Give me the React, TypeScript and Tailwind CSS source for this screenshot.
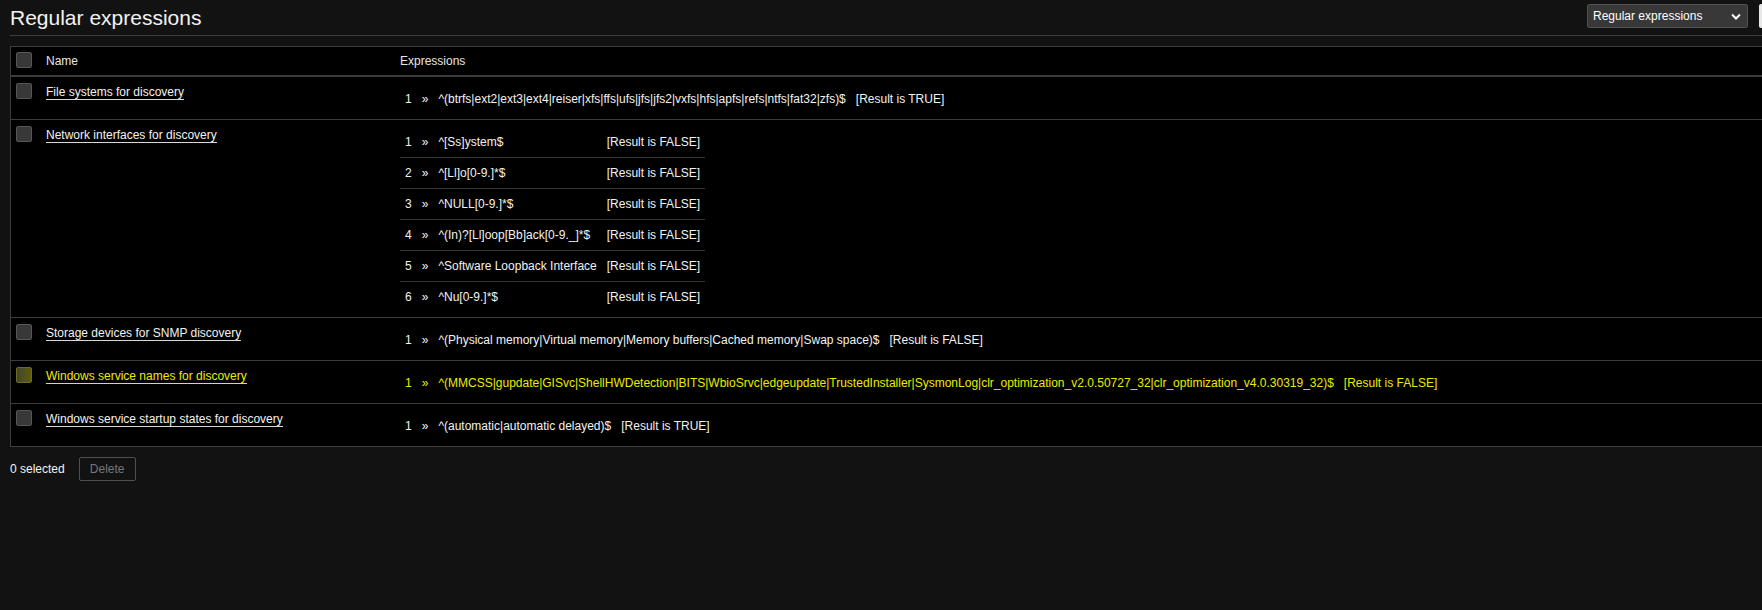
import React from "react";

// one regular expression line with its test result
interface Expression {
  expr: string;
  result: "TRUE" | "FALSE";
}

// a named set of expressions
interface RegexSet {
  name: string;
  highlight?: boolean;
  expressions: Expression[];
}

const regexSets: RegexSet[] = [
  {
    name: "File systems for discovery",
    expressions: [
      {
        expr: "^(btrfs|ext2|ext3|ext4|reiser|xfs|ffs|ufs|jfs|jfs2|vxfs|hfs|apfs|refs|ntfs|fat32|zfs)$",
        result: "TRUE",
      },
    ],
  },
  {
    name: "Network interfaces for discovery",
    expressions: [
      { expr: "^[Ss]ystem$", result: "FALSE" },
      { expr: "^[Ll]o[0-9.]*$", result: "FALSE" },
      { expr: "^NULL[0-9.]*$", result: "FALSE" },
      { expr: "^(In)?[Ll]oop[Bb]ack[0-9._]*$", result: "FALSE" },
      { expr: "^Software Loopback Interface", result: "FALSE" },
      { expr: "^Nu[0-9.]*$", result: "FALSE" },
    ],
  },
  {
    name: "Storage devices for SNMP discovery",
    expressions: [
      {
        expr: "^(Physical memory|Virtual memory|Memory buffers|Cached memory|Swap space)$",
        result: "FALSE",
      },
    ],
  },
  {
    name: "Windows service names for discovery",
    highlight: true,
    expressions: [
      {
        expr: "^(MMCSS|gupdate|GISvc|ShellHWDetection|BITS|WbioSrvc|edgeupdate|TrustedInstaller|SysmonLog|clr_optimization_v2.0.50727_32|clr_optimization_v4.0.30319_32)$",
        result: "FALSE",
      },
    ],
  },
  {
    name: "Windows service startup states for discovery",
    expressions: [{ expr: "^(automatic|automatic delayed)$", result: "TRUE" }],
  },
];

// square checkbox, olive when the row is highlighted
function Checkbox({ highlight }: { highlight?: boolean }) {
  return highlight ? (
    <span className="block w-[16px] h-[16px] rounded-[2px] border border-[#6e6e1e] bg-gradient-to-r from-[#44442c] to-[#5c5c00]" />
  ) : (
    <span className="block w-[16px] h-[16px] rounded-[2px] border border-[#555555] bg-[#383838]" />
  );
}

export default function App() {
  return (
    <div className="w-[1762px] h-[610px] overflow-hidden bg-[#121212] text-[#f2f2f2] text-[12px] leading-[14px] font-['Liberation_Sans',Arial,sans-serif]">
      <div className="w-[1858px]">
        {/* page header */}
        <div className="ml-[10px] w-[1789px] h-[36px] flex items-start border-b border-[#3c3c3c]">
          <h1 className="pt-[6px] text-[21px] leading-[24px] text-[#f2f2f2]">Regular expressions</h1>
          <div className="ml-auto mt-[4px] w-[161px] h-[24px] flex items-center justify-between pl-[5px] pr-[6px] bg-[#383838] border border-[#515151] rounded-[2px] text-white">
            <span>Regular expressions</span>
            <svg width="10" height="7" viewBox="0 0 10 7" className="mt-[1px]">
              <polyline points="1,1.5 5,5.5 9,1.5" fill="none" stroke="#ffffff" strokeWidth="2" />
            </svg>
          </div>
          <div className="ml-[11px] mt-[4px] w-[40px] h-[24px] bg-[#e8e8e8] rounded-[2px]" />
        </div>

        {/* list table */}
        <div className="mt-[10px] ml-[10px] w-[1848px] border border-[#3c3c3c] bg-black">
          <div className="grid grid-cols-[30px_354px_1fr] border-b-2 border-[#3c3c3c] text-[#e6e6e6]">
            <div className="pl-[5px] pt-[5px] pb-[7px]">
              <Checkbox />
            </div>
            <div className="pl-[5px] pt-[7px] pb-[7px]">Name</div>
            <div className="pl-[5px] pt-[7px] pb-[7px]">Expressions</div>
          </div>

          {regexSets.map((set, i) => (
            <div
              key={set.name}
              className={`grid grid-cols-[30px_354px_1fr] ${
                i < regexSets.length - 1 ? "border-b border-[#3c3c3c]" : ""
              } ${set.highlight ? "text-[#ebeb00]" : "text-[#f2f2f2]"}`}
            >
              <div className="pl-[5px] pt-[6px]">
                <Checkbox highlight={set.highlight} />
              </div>
              <div className="pl-[5px] pt-[8px]">
                <span
                  className={`border-b ${
                    set.highlight ? "border-[#ebeb00]" : "border-[#d9d9d9]"
                  }`}
                >
                  {set.name}
                </span>
              </div>
              <div className="pl-[5px] pt-[7px] pb-[5px]">
                <table className="border-collapse">
                  <tbody>
                    {set.expressions.map((e, j) => (
                      <tr key={j} className={j > 0 ? "border-t border-[#333333]" : ""}>
                        <td
                          className={`${
                            j > 0 ? "h-[31px]" : "h-[30px]"
                          } p-0 pl-[5px] pr-[5px] whitespace-nowrap`}
                        >
                          {j + 1}
                        </td>
                        <td className="p-0 px-[5px] whitespace-nowrap">»</td>
                        <td className="p-0 px-[5px] whitespace-nowrap">{e.expr}</td>
                        <td className="p-0 px-[5px] whitespace-nowrap">[Result is {e.result}]</td>
                      </tr>
                    ))}
                  </tbody>
                </table>
              </div>
            </div>
          ))}
        </div>

        {/* footer actions */}
        <div className="ml-[10px] mt-[10px] flex items-center">
          <span>0 selected</span>
          <button className="ml-[14px] w-[57px] h-[24px] border border-[#4f4f4f] rounded-[2px] text-[#777777]">
            Delete
          </button>
        </div>
      </div>
    </div>
  );
}
